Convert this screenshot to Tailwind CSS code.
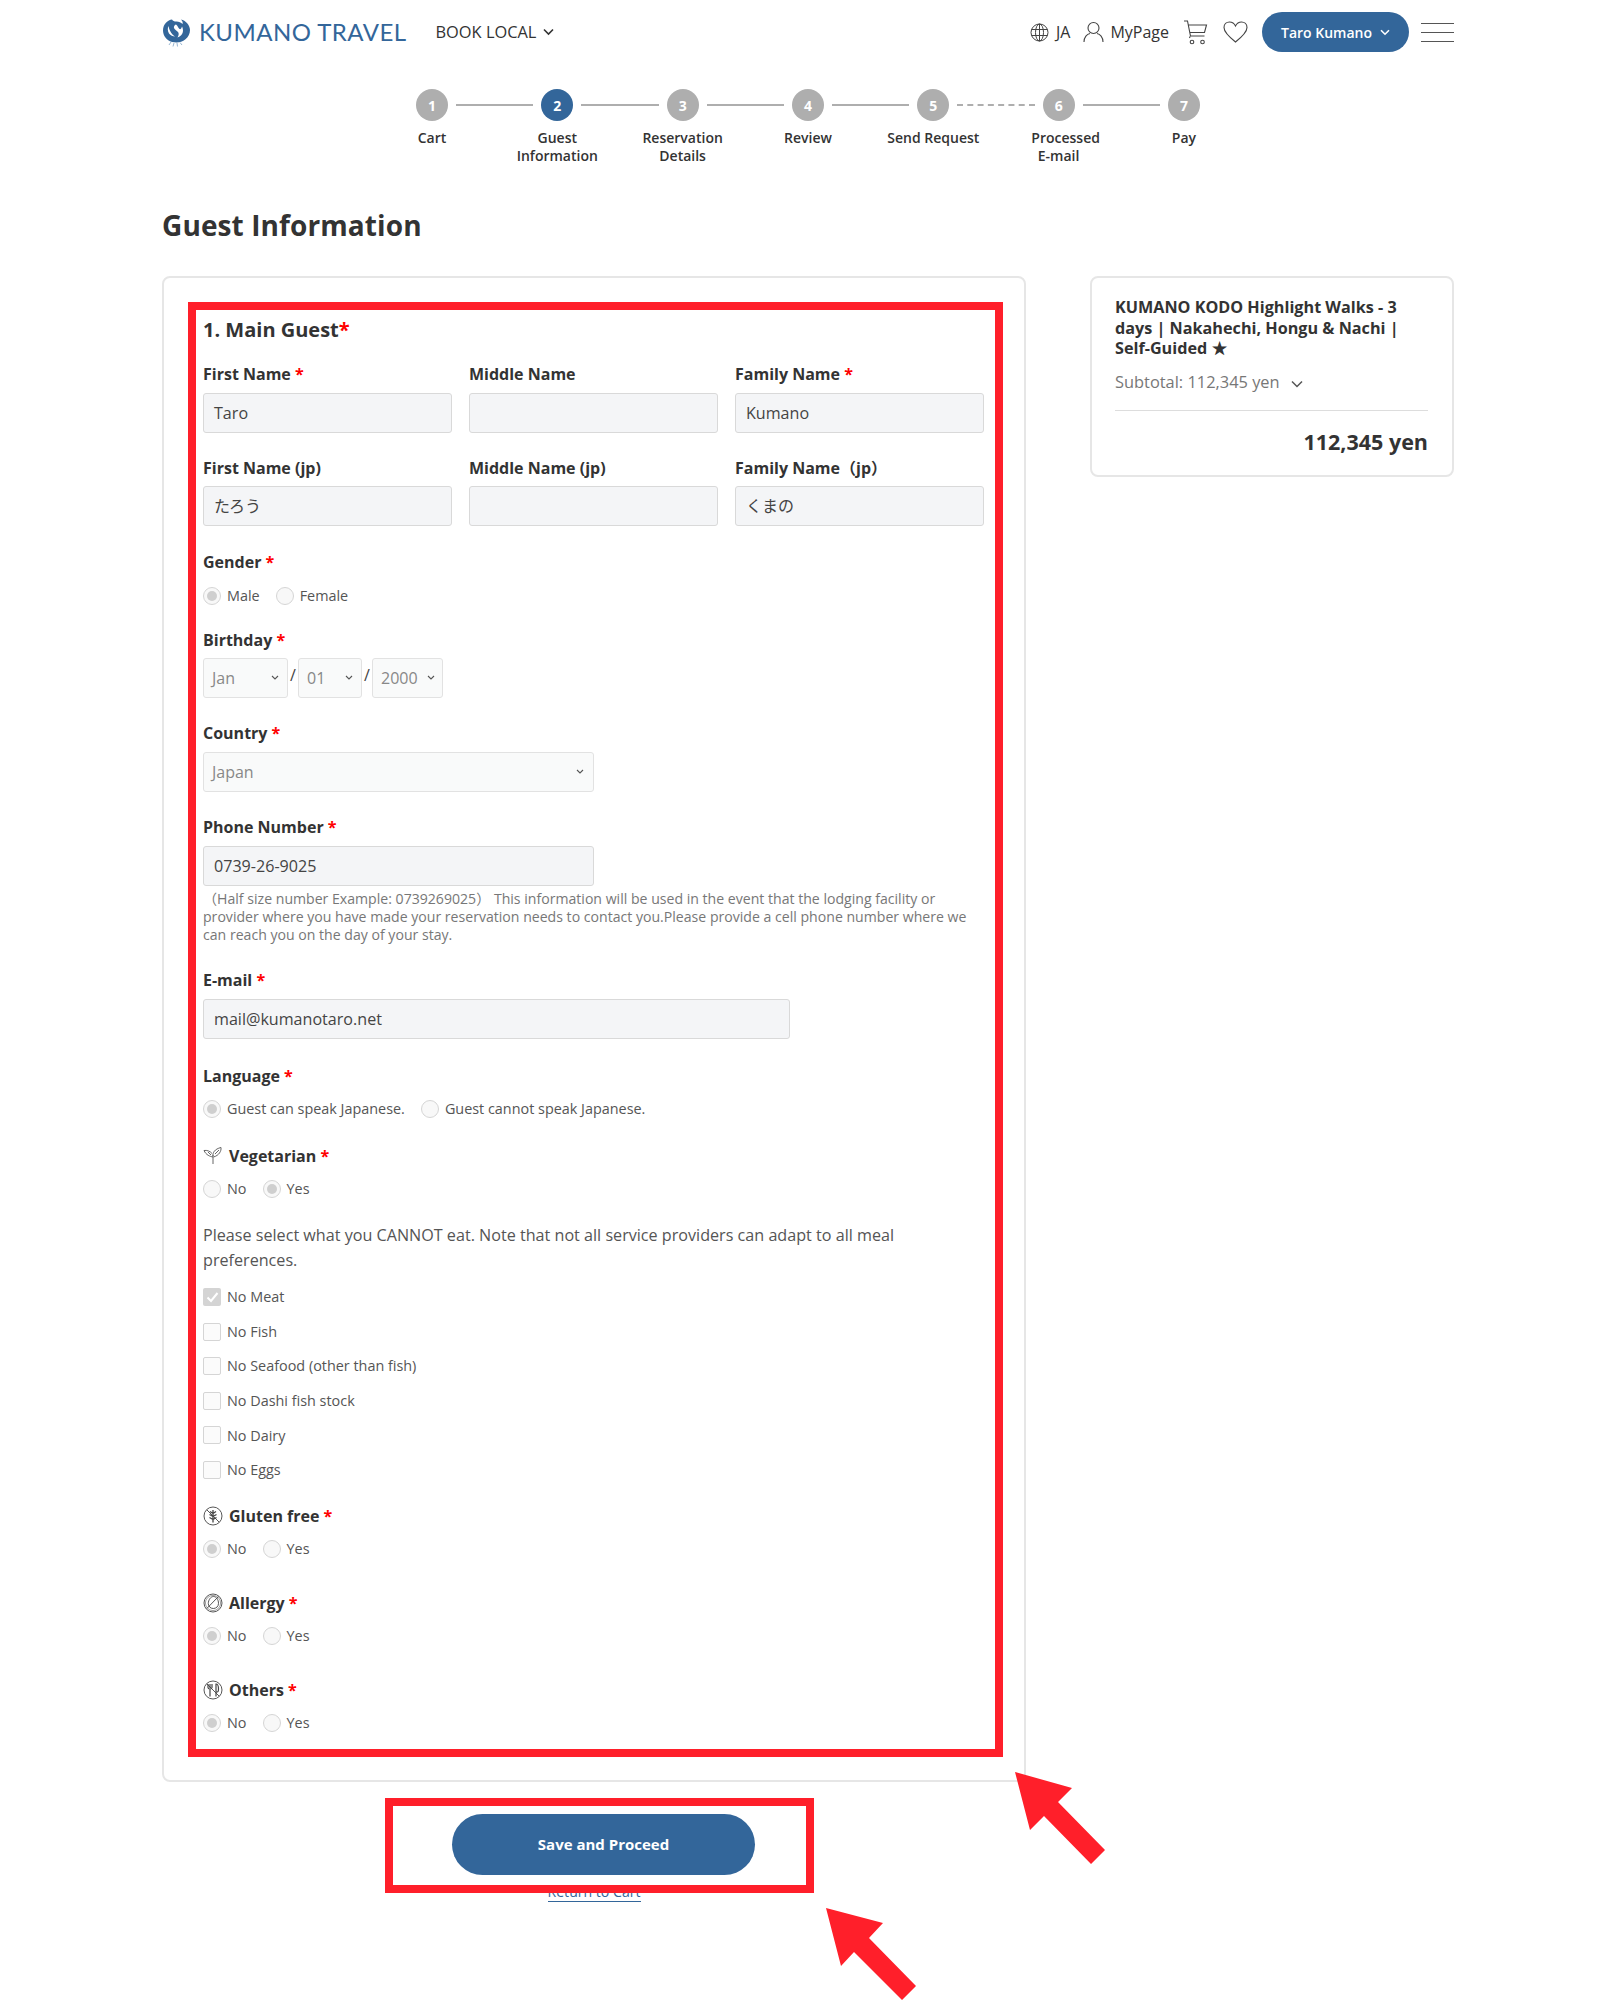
<!DOCTYPE html>
<html lang="en">

<head>
    <meta charset="UTF-8">
    <title>Guest Information | Kumano Travel</title>
    <script src="https://cdn.jsdelivr.net/npm/@tailwindcss/browser@4"></script>
</head>

<body class="relative bg-white w-[1600px] h-[2000px] overflow-hidden text-[#333] font-['Open_Sans','Noto_Sans_CJK_JP',sans-serif]">
    <div class="pl-[162px] w-[1454px]">
        <!-- header -->
        <header class="h-[64px] flex items-center">
            <svg class="w-[29px] h-[29px] shrink-0" viewBox="0 0 29 29">
                <path fill="#33669a" d="M10 1.500C6 2 1 6 1 12.500c0 5 3.500 10 9 11.500l4.500.5c6 0 13.500-4.500 13.500-12.500C28 7 23.500 2.500 19 1.500c1.500 1.500 2 3 1.500 4.500C19 4.500 17 3.500 14.500 3.500 12 3.500 11 3 10 1.500z"/>
                <path fill="#fff" d="M14 6.500c-1.500.5-2.500 2-2 3.500.5 1.500 2.500 2.500 4 4 1 1 1 3-.5 5.500 3-1 5.500-3.500 5.500-7 0-1.500-.5-3-1-4-.5 2-1.500 3-2.500 2.500-1-.5-1.500-3-3.500-4.500z"/>
                <path fill="#fff" d="M6.500 8c-1 2-1 5 .5 7.500 1.500 2 4 3 6 3-2.500-1.500-5.500-5-6.500-10.500z"/>
                <path fill="none" stroke="#7fa3c6" stroke-width=".8" d="M9 24l-2 3M12 25l-1 3.500M15 25l.5 3.500M18 24.500l2 2.500"/>
            </svg>
            <a class="ml-[8px] text-[24px] leading-none font-normal tracking-[0.45px] text-[#33669a] font-['Lato',sans-serif]">KUMANO TRAVEL</a>
            <a class="ml-[29px] text-[16.400px] text-[#333] flex items-center">BOOK LOCAL
                <svg class="ml-[7px] w-[11px] h-[8px]" viewBox="0 0 11 8" fill="none" stroke="#333" stroke-width="1.600"><path d="M1 1.500l4.500 4.500 4.500-4.500"/></svg>
            </a>
            <div class="ml-auto flex items-center">
                <svg class="w-[19px] h-[19px]" viewBox="0 0 19 19" fill="none" stroke="#444" stroke-width="1"><circle cx="9.500" cy="9.500" r="8.500"/><ellipse cx="9.500" cy="9.500" rx="4" ry="8.500"/><path d="M9.500 1v17M1.500 6.500h16M1.500 12.500h16"/></svg>
                <span class="ml-[7px] text-[16px]">JA</span>
                <svg class="ml-[13px] w-[21px] h-[22px]" viewBox="0 0 21 22" fill="none" stroke="#444" stroke-width="1.100"><circle cx="10.500" cy="7" r="5.500"/><path d="M1 21c0-5 3-8 6-8.500M20 21c0-5-3-8-6-8.500"/></svg>
                <span class="ml-[6px] text-[16px]">MyPage</span>
                <svg class="ml-[15px] w-[24px] h-[25px]" viewBox="0 0 24 25" fill="none" stroke="#444" stroke-width="1.100"><path d="M0 1h3.500l3 15h14M4.500 5h18l-2 7.500H6M6 16.500l-.5 1.500"/><circle cx="8" cy="22" r="1.800"/><circle cx="18.500" cy="22" r="1.800"/></svg>
                <svg class="ml-[15px] w-[25px] h-[22px]" viewBox="0 0 25 22" fill="none" stroke="#444" stroke-width="1.100"><path d="M12.500 21C5 15 1 11 1 6.500 1 3 3.500 1 6.500 1c2.500 0 4.800 1.500 6 4 1.200-2.500 3.500-4 6-4 3 0 5.500 2 5.500 5.500 0 4.500-4 8.500-11.500 14.500z"/></svg>
                <button class="ml-[14px] w-[147px] h-[40px] rounded-full bg-[#33669a] text-white text-[14px] font-semibold flex items-center justify-center">Taro Kumano
                    <svg class="ml-[8px] w-[10px] h-[7px]" viewBox="0 0 10 7" fill="none" stroke="#fff" stroke-width="1.600"><path d="M1 1.200l4 4 4-4"/></svg>
                </button>
                <div class="ml-[12px] w-[33px] flex flex-col gap-[8px]">
                    <div class="h-px bg-[#555]"></div>
                    <div class="h-px bg-[#555]"></div>
                    <div class="h-px bg-[#555]"></div>
                </div>
            </div>
        </header>

        <!-- steps -->
        <div class="mt-[25px] ml-[254px] flex items-center text-white text-[14px] font-bold">
            <div class="w-[32px] h-[32px] rounded-full bg-[#aeaeae] flex items-center justify-center">1</div>
            <div class="mx-[8px] w-[77.330px] h-[2px] bg-[#aeaeae]"></div>
            <div class="w-[32px] h-[32px] rounded-full bg-[#33669a] flex items-center justify-center">2</div>
            <div class="mx-[8px] w-[77.330px] h-[2px] bg-[#aeaeae]"></div>
            <div class="w-[32px] h-[32px] rounded-full bg-[#aeaeae] flex items-center justify-center">3</div>
            <div class="mx-[8px] w-[77.330px] h-[2px] bg-[#aeaeae]"></div>
            <div class="w-[32px] h-[32px] rounded-full bg-[#aeaeae] flex items-center justify-center">4</div>
            <div class="mx-[8px] w-[77.330px] h-[2px] bg-[#aeaeae]"></div>
            <div class="w-[32px] h-[32px] rounded-full bg-[#aeaeae] flex items-center justify-center">5</div>
            <div class="mx-[8px] w-[77.330px] border-t-2 border-dashed border-[#aeaeae]"></div>
            <div class="w-[32px] h-[32px] rounded-full bg-[#aeaeae] flex items-center justify-center">6</div>
            <div class="mx-[8px] w-[77.330px] h-[2px] bg-[#aeaeae]"></div>
            <div class="w-[32px] h-[32px] rounded-full bg-[#aeaeae] flex items-center justify-center">7</div>
        </div>
        <div class="mt-[8px] ml-[207.300px] flex text-[14px] leading-[18px] font-semibold text-center text-[#333]">
            <div class="w-[125.330px]">Cart</div>
            <div class="w-[125.330px]">Guest<br>Information</div>
            <div class="w-[125.330px]">Reservation<br>Details</div>
            <div class="w-[125.330px]">Review</div>
            <div class="w-[125.330px]">Send Request</div>
            <div class="w-[125.330px]"><span class="block pl-[14px]">Processed</span>E-mail</div>
            <div class="w-[125.330px]">Pay</div>
        </div>

        <h1 class="mt-[41px] text-[28px] leading-[38px] font-bold tracking-[0.1px] text-[#333]">Guest Information</h1>

        <main class="mt-[32px] flex items-start">
            <div class="w-[864px] shrink-0">
                <form class="border-2 border-[#e6e6e6] rounded-lg pl-[39px] pb-[47px] pt-[38px]">
                    <div class="w-[781px]">
                        <h2 class="text-[20px] leading-[28px] font-bold">1. Main Guest<span class="text-[#ff0000]">*</span></h2>

                        <div class="mt-[18px] grid grid-cols-3 gap-x-[17px] font-bold text-[16px] leading-[24px]">
                            <label>First Name <span class="text-[#ff0000]">*</span></label>
                            <label>Middle Name</label>
                            <label>Family Name <span class="text-[#ff0000]">*</span></label>
                        </div>
                        <div class="mt-[7px] grid grid-cols-3 gap-x-[17px] text-[16.100px] text-[#444]">
                            <div class="h-[40px] px-[10px] flex items-center bg-[#f4f5f7] border border-[#d9d9d9] rounded-[3px]">Taro</div>
                            <div class="h-[40px] px-[10px] flex items-center bg-[#f4f5f7] border border-[#d9d9d9] rounded-[3px]"></div>
                            <div class="h-[40px] px-[10px] flex items-center bg-[#f4f5f7] border border-[#d9d9d9] rounded-[3px]">Kumano</div>
                        </div>

                        <div class="mt-[23px] grid grid-cols-3 gap-x-[17px] font-bold text-[16px] leading-[24px]">
                            <label>First Name (jp)</label>
                            <label>Middle Name (jp)</label>
                            <label>Family Name（jp）</label>
                        </div>
                        <div class="mt-[6px] grid grid-cols-3 gap-x-[17px] text-[16px] text-[#444]">
                            <div class="h-[40px] px-[10px] flex items-center bg-[#f4f5f7] border border-[#d9d9d9] rounded-[3px]">たろう</div>
                            <div class="h-[40px] px-[10px] flex items-center bg-[#f4f5f7] border border-[#d9d9d9] rounded-[3px]"></div>
                            <div class="h-[40px] px-[10px] flex items-center bg-[#f4f5f7] border border-[#d9d9d9] rounded-[3px]">くまの</div>
                        </div>

                        <label class="block mt-[24px] font-bold text-[16px] leading-[24px]">Gender <span class="text-[#ff0000]">*</span></label>
                        <div class="mt-[12px] h-[20px] flex items-center text-[14.400px] text-[#555]">
                            <span class="w-[18px] h-[18px] rounded-full border border-[#d5d5d5] bg-[#f8f8f8] flex items-center justify-center"><span class="w-[10px] h-[10px] rounded-full bg-[#cfcfcf]"></span></span>
                            <span class="ml-[6px]">Male</span>
                            <span class="ml-[16px] w-[18px] h-[18px] rounded-full border border-[#d5d5d5] bg-[#f8f8f8]"></span>
                            <span class="ml-[6px]">Female</span>
                        </div>

                        <label class="block mt-[22px] font-bold text-[16px] leading-[24px]">Birthday <span class="text-[#ff0000]">*</span></label>
                        <div class="mt-[6px] flex items-center text-[16px] text-[#888]">
                            <div class="w-[85px] h-[40px] pl-[8px] pr-[8px] flex items-center justify-between bg-[#f9fafa] border border-[#e2e2e2] rounded-[3px]">Jan
                                <svg class="w-[8px] h-[6px]" viewBox="0 0 8 6" fill="none" stroke="#555" stroke-width="1.100"><path d="M1 1l3 3 3-3"/></svg>
                            </div>
                            <span class="w-[10px] text-center text-[#444] -mt-[6px]">/</span>
                            <div class="w-[64px] h-[40px] pl-[8px] pr-[8px] flex items-center justify-between bg-[#f9fafa] border border-[#e2e2e2] rounded-[3px]">01
                                <svg class="w-[8px] h-[6px]" viewBox="0 0 8 6" fill="none" stroke="#555" stroke-width="1.100"><path d="M1 1l3 3 3-3"/></svg>
                            </div>
                            <span class="w-[10px] text-center text-[#444] -mt-[6px]">/</span>
                            <div class="w-[71px] h-[40px] pl-[8px] pr-[7px] flex items-center justify-between bg-[#f9fafa] border border-[#e2e2e2] rounded-[3px]">2000
                                <svg class="w-[8px] h-[6px]" viewBox="0 0 8 6" fill="none" stroke="#555" stroke-width="1.100"><path d="M1 1l3 3 3-3"/></svg>
                            </div>
                        </div>

                        <label class="block mt-[23px] font-bold text-[16px] leading-[24px]">Country <span class="text-[#ff0000]">*</span></label>
                        <div class="mt-[7px] w-[391px] h-[40px] pl-[8px] pr-[9px] flex items-center justify-between bg-[#f9fafa] border border-[#e2e2e2] rounded-[3px] text-[16px] text-[#888]">Japan
                            <svg class="w-[8px] h-[6px]" viewBox="0 0 8 6" fill="none" stroke="#555" stroke-width="1.100"><path d="M1 1l3 3 3-3"/></svg>
                        </div>

                        <label class="block mt-[23px] font-bold text-[16px] leading-[24px]">Phone Number <span class="text-[#ff0000]">*</span></label>
                        <div class="mt-[7px] w-[391px] h-[40px] px-[10px] flex items-center bg-[#f4f5f7] border border-[#d9d9d9] rounded-[3px] text-[16.100px] text-[#444]">0739-26-9025</div>
                        <p class="mt-[4px] w-[775px] text-[14.100px] leading-[18px] text-[#777]">（Half size number Example: 0739269025） This information will be used in the event that the lodging facility or provider where you have made your reservation needs to contact you.Please provide a cell phone number where we can reach you on the day of your stay.</p>

                        <label class="block mt-[24px] font-bold text-[16px] leading-[24px]">E-mail <span class="text-[#ff0000]">*</span></label>
                        <div class="mt-[7px] w-[587px] h-[40px] px-[10px] flex items-center bg-[#f4f5f7] border border-[#d9d9d9] rounded-[3px] text-[16.100px] text-[#444]">mail@kumanotaro.net</div>

                        <label class="block mt-[25px] font-bold text-[16px] leading-[24px]">Language <span class="text-[#ff0000]">*</span></label>
                        <div class="mt-[11px] h-[20px] flex items-center text-[14.400px] text-[#555]">
                            <span class="w-[18px] h-[18px] rounded-full border border-[#d5d5d5] bg-[#f8f8f8] flex items-center justify-center"><span class="w-[10px] h-[10px] rounded-full bg-[#cfcfcf]"></span></span>
                            <span class="ml-[6px]">Guest can speak Japanese.</span>
                            <span class="ml-[16px] w-[18px] h-[18px] rounded-full border border-[#d5d5d5] bg-[#f8f8f8]"></span>
                            <span class="ml-[6px]">Guest cannot speak Japanese.</span>
                        </div>

                        <label class="mt-[25px] h-[24px] flex items-center font-bold text-[16px] leading-[24px]">
                            <svg class="w-[20px] h-[18px] mr-[6px]" viewBox="0 0 20 18" fill="none" stroke="#555" stroke-width=".9"><path d="M10 17V8M10 10C7 9.500 3 8 1 3.500c3-.5 6 .5 8 3M10 9c-.5-3 1.500-7 8-8.500 .5 3.500-2 8-7.500 9.500M12 7l4-4M5 5l3 3"/></svg>
                            <span>Vegetarian <span class="text-[#ff0000]">*</span></span>
                        </label>
                        <div class="mt-[11px] h-[20px] flex items-center text-[14.400px] text-[#555]">
                            <span class="w-[18px] h-[18px] rounded-full border border-[#d5d5d5] bg-[#f8f8f8]"></span>
                            <span class="ml-[6px]">No</span>
                            <span class="ml-[16px] w-[18px] h-[18px] rounded-full border border-[#d5d5d5] bg-[#f8f8f8] flex items-center justify-center"><span class="w-[10px] h-[10px] rounded-full bg-[#cfcfcf]"></span></span>
                            <span class="ml-[6px]">Yes</span>
                        </div>

                        <p class="mt-[24px] w-[740px] text-[16.150px] leading-[25px] text-[#555]">Please select what you CANNOT eat. Note that not all service providers can adapt to all meal preferences.</p>

                        <div class="mt-[14px] flex flex-col gap-[14.600px] text-[14.400px] text-[#555]">
                            <div class="h-[20px] flex items-center">
                                <span class="w-[18px] h-[18px] rounded-[2px] bg-[#d4d4d4] flex items-center justify-center">
                                    <svg class="w-[13px] h-[11px]" viewBox="0 0 13 11" fill="none" stroke="#fff" stroke-width="2"><path d="M1.500 5.500l3.500 3.500 6.500-8"/></svg>
                                </span>
                                <span class="ml-[6px]">No Meat</span>
                            </div>
                            <div class="h-[20px] flex items-center">
                                <span class="w-[18px] h-[18px] rounded-[2px] border border-[#d5d5d5] bg-[#fbfbfb]"></span>
                                <span class="ml-[6px]">No Fish</span>
                            </div>
                            <div class="h-[20px] flex items-center">
                                <span class="w-[18px] h-[18px] rounded-[2px] border border-[#d5d5d5] bg-[#fbfbfb]"></span>
                                <span class="ml-[6px]">No Seafood (other than fish)</span>
                            </div>
                            <div class="h-[20px] flex items-center">
                                <span class="w-[18px] h-[18px] rounded-[2px] border border-[#d5d5d5] bg-[#fbfbfb]"></span>
                                <span class="ml-[6px]">No Dashi fish stock</span>
                            </div>
                            <div class="h-[20px] flex items-center">
                                <span class="w-[18px] h-[18px] rounded-[2px] border border-[#d5d5d5] bg-[#fbfbfb]"></span>
                                <span class="ml-[6px]">No Dairy</span>
                            </div>
                            <div class="h-[20px] flex items-center">
                                <span class="w-[18px] h-[18px] rounded-[2px] border border-[#d5d5d5] bg-[#fbfbfb]"></span>
                                <span class="ml-[6px]">No Eggs</span>
                            </div>
                        </div>

                        <label class="mt-[24px] h-[24px] flex items-center font-bold text-[16px] leading-[24px]">
                            <svg class="w-[20px] h-[20px] mr-[6px]" viewBox="0 0 20 20" fill="none" stroke="#444" stroke-width=".9"><circle cx="10" cy="10" r="9"/><path d="M3.800 3.800l12.400 12.400"/><path d="M10 4v12.500M10 7.500L7 5.500M10 7.500l3-2M10 10.500L6.500 8.500M10 10.500l3.500-2M10 13.500l-3.500-2M10 13.500l3.500-2" stroke-width="1.300"/></svg>
                            <span>Gluten free <span class="text-[#ff0000]">*</span></span>
                        </label>
                        <div class="mt-[11px] h-[20px] flex items-center text-[14.400px] text-[#555]">
                            <span class="w-[18px] h-[18px] rounded-full border border-[#d5d5d5] bg-[#f8f8f8] flex items-center justify-center"><span class="w-[10px] h-[10px] rounded-full bg-[#cfcfcf]"></span></span>
                            <span class="ml-[6px]">No</span>
                            <span class="ml-[16px] w-[18px] h-[18px] rounded-full border border-[#d5d5d5] bg-[#f8f8f8]"></span>
                            <span class="ml-[6px]">Yes</span>
                        </div>

                        <label class="mt-[32px] h-[24px] flex items-center font-bold text-[16px] leading-[24px]">
                            <svg class="w-[20px] h-[20px] mr-[6px]" viewBox="0 0 20 20" fill="none" stroke="#444" stroke-width=".9"><circle cx="10" cy="10" r="9"/><circle cx="10" cy="10" r="7.600" stroke-width=".5"/><path d="M10.500 3.500c2.800 0 5 3.300 5 6.800 0 3.200-2.300 5.200-5.200 5.200-2.800 0-5-2-5-5 0-3.500 2.400-7 5.200-7z"/><path d="M15.500 3.500L3.800 15.500"/></svg>
                            <span>Allergy <span class="text-[#ff0000]">*</span></span>
                        </label>
                        <div class="mt-[11px] h-[20px] flex items-center text-[14.400px] text-[#555]">
                            <span class="w-[18px] h-[18px] rounded-full border border-[#d5d5d5] bg-[#f8f8f8] flex items-center justify-center"><span class="w-[10px] h-[10px] rounded-full bg-[#cfcfcf]"></span></span>
                            <span class="ml-[6px]">No</span>
                            <span class="ml-[16px] w-[18px] h-[18px] rounded-full border border-[#d5d5d5] bg-[#f8f8f8]"></span>
                            <span class="ml-[6px]">Yes</span>
                        </div>

                        <label class="mt-[32px] h-[24px] flex items-center font-bold text-[16px] leading-[24px]">
                            <svg class="w-[20px] h-[20px] mr-[6px]" viewBox="0 0 20 20" fill="none" stroke="#444" stroke-width=".9"><circle cx="10" cy="10" r="9"/><path d="M3.800 3.800l12.400 12.400"/><path d="M7 9v7.500M5 4v3.500C5 8.500 6 9 7 9s2-.5 2-1.500V4M7 4v4M13 16.500V4c1.800 0 2.500 2 2.500 5s-.7 3-2.500 3" stroke-width="1.200"/></svg>
                            <span>Others <span class="text-[#ff0000]">*</span></span>
                        </label>
                        <div class="mt-[11px] h-[20px] flex items-center text-[14.400px] text-[#555]">
                            <span class="w-[18px] h-[18px] rounded-full border border-[#d5d5d5] bg-[#f8f8f8] flex items-center justify-center"><span class="w-[10px] h-[10px] rounded-full bg-[#cfcfcf]"></span></span>
                            <span class="ml-[6px]">No</span>
                            <span class="ml-[16px] w-[18px] h-[18px] rounded-full border border-[#d5d5d5] bg-[#f8f8f8]"></span>
                            <span class="ml-[6px]">Yes</span>
                        </div>
                    </div>
                </form>

                <div class="flex flex-col items-center">
                    <button class="mt-[32px] ml-[19px] w-[303px] h-[61px] rounded-full bg-[#33669a] text-white text-[15px] font-bold">Save and Proceed</button>
                    <a class="mt-[8px] text-[14.100px] leading-[18px] text-[#33669a] border-b border-[#33669a]">Return to Cart</a>
                </div>
            </div>

            <!-- summary -->
            <aside class="ml-[64px] w-[364px] h-[201px] border-2 border-[#e6e6e6] rounded-lg pl-[23px] pr-[24px] pt-[19px]">
                <h3 class="text-[16.200px] leading-[20.700px] font-bold">KUMANO KODO Highlight Walks - 3 days | Nakahechi, Hongu &amp; Nachi | Self-Guided ★</h3>
                <div class="mt-[11px] pb-[16px] border-b border-[#ddd] flex items-center text-[16.400px] leading-[24px] text-[#777]">Subtotal: 112,345 yen
                    <svg class="ml-[11px] w-[12px] h-[8px] mt-[3px]" viewBox="0 0 12 8" fill="none" stroke="#555" stroke-width="1.500"><path d="M1 1.500l5 5 5-5"/></svg>
                </div>
                <div class="mt-[16px] text-right text-[21.500px] leading-[30px] font-bold">112,345 yen</div>
            </aside>
        </main>
    </div>

    <!-- red review annotations drawn over the screenshot -->
    <svg class="absolute top-0 left-0 w-[1600px] h-[2000px] pointer-events-none" viewBox="0 0 1600 2000">
        <rect x="192" y="306" width="807" height="1447" fill="none" stroke="#ff1f2a" stroke-width="8"/>
        <rect x="389" y="1802" width="421" height="87" fill="none" stroke="#ff1f2a" stroke-width="8"/>
        <polygon fill="#ff1f2a" points="1015,1772 1072,1788 1058,1802 1105,1850 1091,1864 1044,1816 1030,1830"/>
        <polygon fill="#ff1f2a" points="826,1908 883,1923 869,1938 916,1986 902,2000 854,1952 841,1966"/>
    </svg>
</body>

</html>
